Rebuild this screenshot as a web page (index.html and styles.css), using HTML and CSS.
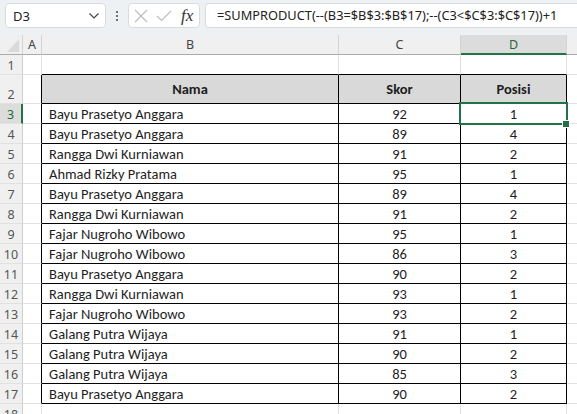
FILE: index.html
```html
<!DOCTYPE html>
<html>
<head>
<meta charset="utf-8">
<link rel="stylesheet" href="styles.css">
</head>
<body>
<div class="topbar">
  <div class="namebox">
    <span class="nb-text">D3</span>
    <svg class="chev" width="12" height="8" viewBox="0 0 12 8"><path d="M1.5 1.5 L6 6 L10.5 1.5" fill="none" stroke="#444" stroke-width="1.2"/></svg>
  </div>
  <div class="dots"><span></span><span></span><span></span></div>
  <div class="fxbox">
    <svg width="14" height="14" viewBox="0 0 14 14"><path d="M1 1 L13 13 M13 1 L1 13" stroke="#bdbdbd" stroke-width="1.2" fill="none"/></svg>
    <svg width="16" height="12" viewBox="0 0 16 12"><path d="M1 6 L5.5 10.5 L15 1" stroke="#bdbdbd" stroke-width="1.2" fill="none"/></svg>
    <span class="fx">fx</span>
  </div>
  <div class="formula">=SUMPRODUCT(--(B3=$B$3:$B$17);--(C3&lt;$C$3:$C$17))+1</div>
</div>
<table class="sheet">
  <colgroup>
    <col class="c-rh"><col class="c-a"><col class="c-b"><col class="c-c"><col class="c-d"><col class="c-e">
  </colgroup>
  <tr class="hdr">
    <td class="corner"><svg width="12" height="13" viewBox="0 0 12 13"><polygon points="12,0 12,13 0,13" fill="#dadada"/></svg></td>
    <td class="ch">A</td><td class="ch">B</td><td class="ch">C</td><td class="ch ch-sel">D</td><td class="ch"></td>
  </tr>
  <tr class="r"><td class="rh">1</td><td></td><td class="tb-top"></td><td class="tb-top"></td><td class="tb-top"></td><td></td></tr>
  <tr class="r2"><td class="rh">2</td><td class="tb-left"></td><td class="tb th">Nama</td><td class="tb th">Skor</td><td class="tb th">Posisi</td><td></td></tr>
  <tr class="r"><td class="rh rh-sel">3</td><td class="tb-left"></td><td class="tb nm">Bayu Prasetyo Anggara</td><td class="tb num">92</td><td class="tb num sel">1<div class="selbox"></div><div class="handle"></div></td><td></td></tr>
  <tr class="r"><td class="rh">4</td><td class="tb-left"></td><td class="tb nm">Bayu Prasetyo Anggara</td><td class="tb num">89</td><td class="tb num">4</td><td></td></tr>
  <tr class="r"><td class="rh">5</td><td class="tb-left"></td><td class="tb nm">Rangga Dwi Kurniawan</td><td class="tb num">91</td><td class="tb num">2</td><td></td></tr>
  <tr class="r"><td class="rh">6</td><td class="tb-left"></td><td class="tb nm">Ahmad Rizky Pratama</td><td class="tb num">95</td><td class="tb num">1</td><td></td></tr>
  <tr class="r"><td class="rh">7</td><td class="tb-left"></td><td class="tb nm">Bayu Prasetyo Anggara</td><td class="tb num">89</td><td class="tb num">4</td><td></td></tr>
  <tr class="r"><td class="rh">8</td><td class="tb-left"></td><td class="tb nm">Rangga Dwi Kurniawan</td><td class="tb num">91</td><td class="tb num">2</td><td></td></tr>
  <tr class="r"><td class="rh">9</td><td class="tb-left"></td><td class="tb nm">Fajar Nugroho Wibowo</td><td class="tb num">95</td><td class="tb num">1</td><td></td></tr>
  <tr class="r"><td class="rh">10</td><td class="tb-left"></td><td class="tb nm">Fajar Nugroho Wibowo</td><td class="tb num">86</td><td class="tb num">3</td><td></td></tr>
  <tr class="r"><td class="rh">11</td><td class="tb-left"></td><td class="tb nm">Bayu Prasetyo Anggara</td><td class="tb num">90</td><td class="tb num">2</td><td></td></tr>
  <tr class="r"><td class="rh">12</td><td class="tb-left"></td><td class="tb nm">Rangga Dwi Kurniawan</td><td class="tb num">93</td><td class="tb num">1</td><td></td></tr>
  <tr class="r"><td class="rh">13</td><td class="tb-left"></td><td class="tb nm">Fajar Nugroho Wibowo</td><td class="tb num">93</td><td class="tb num">2</td><td></td></tr>
  <tr class="r"><td class="rh">14</td><td class="tb-left"></td><td class="tb nm">Galang Putra Wijaya</td><td class="tb num">91</td><td class="tb num">1</td><td></td></tr>
  <tr class="r"><td class="rh">15</td><td class="tb-left"></td><td class="tb nm">Galang Putra Wijaya</td><td class="tb num">90</td><td class="tb num">2</td><td></td></tr>
  <tr class="r"><td class="rh">16</td><td class="tb-left"></td><td class="tb nm">Galang Putra Wijaya</td><td class="tb num">85</td><td class="tb num">3</td><td></td></tr>
  <tr class="r"><td class="rh">17</td><td class="tb-left"></td><td class="tb nm">Bayu Prasetyo Anggara</td><td class="tb num">90</td><td class="tb num">2</td><td></td></tr>
  <tr class="r"><td class="rh">18</td><td></td><td></td><td></td><td></td><td></td></tr>
</table>
</body>
</html>
```
FILE: styles.css
```css
html, body {
  margin: 0;
  padding: 0;
  overflow: hidden;
  width: 577px;
  height: 414px;
  background: #ffffff;
}
.topbar {
  height: 35px;
  box-sizing: border-box;
  background: #eef1f4;
  display: flex;
  align-items: flex-start;
  padding: 3px 0 0 5px;
  overflow: hidden;
  font-family: "Noto Sans", "Open Sans", sans-serif;
}
.topbar > * { flex-shrink: 0; }
.namebox {
  width: 101px;
  height: 25px;
  box-sizing: border-box;
  background: #fff;
  border: 1px solid #d9dbde;
  border-radius: 4px;
  display: flex;
  align-items: center;
  justify-content: space-between;
  padding: 0 5px 0 7px;
  font-size: 13px;
  color: #222;
}
.chev { margin-top: 1px; }
.dots {
  width: 22px;
  height: 25px;
  display: flex;
  flex-direction: column;
  align-items: center;
  justify-content: center;
  gap: 2px;
}
.dots span {
  width: 2px;
  height: 2px;
  background: #444;
  border-radius: 1px;
}
.fxbox {
  width: 72px;
  height: 25px;
  box-sizing: border-box;
  background: #fff;
  border: 1px solid #d9dbde;
  border-radius: 4px;
  display: flex;
  align-items: center;
  padding: 0 4px 0 5px;
  gap: 8px;
}
.fx {
  font-family: "Liberation Serif", "DejaVu Serif", serif;
  font-style: italic;
  font-size: 17px;
  color: #333;
  margin-left: 1px;
  line-height: 1;
}
.formula {
  margin-left: 5px;
  width: 372px;
  height: 25px;
  box-sizing: border-box;
  background: #fff;
  border: 1px solid #d9dbde;
  border-right: none;
  border-radius: 4px 0 0 4px;
  padding: 0 0 0 11px;
  font-size: 12.8px;
  line-height: 23px;
  color: #222;
  white-space: nowrap;
  overflow: hidden;
}
.sheet {
  border-collapse: separate;
  border-spacing: 0;
  table-layout: fixed;
  width: 620px;
  font-family: "Carlito", "Liberation Sans", sans-serif;
  font-size: 14.5px;
  color: #1e1e1e;
}
.c-rh { width: 23px; }
.c-a { width: 19px; }
.c-b { width: 297px; }
.c-c { width: 122px; }
.c-d { width: 106px; }
.c-e { width: 53px; }
.sheet td {
  box-sizing: border-box;
  border-right: 1px solid #e1e1e1;
  border-bottom: 1px solid #e1e1e1;
  padding: 0;
  white-space: nowrap;
  overflow: visible;
}
.hdr td {
  height: 20px;
  background: #f0f0f0;
  border-bottom: 1px solid #ababab;
  border-right: 1px solid #d4d4d4;
  font-family: "Noto Sans", "Open Sans", sans-serif;
  font-size: 12.5px;
  color: #444;
  text-align: center;
  vertical-align: middle;
}
.hdr td.corner {
  text-align: right;
  vertical-align: bottom;
  padding: 0 3px 2px 0;
  line-height: 0;
}
.hdr td.ch-sel {
  background: #dcdcdc;
  color: #1d6b3e;
  border-bottom: 2px solid #217346;
}
.r td { height: 20px; }
.r2 td { height: 29px; }
.sheet td.rh {
  background: #f0f0f0;
  border-right: 1px solid #cfcfcf;
  border-bottom: 1px solid #e1e1e1;
  font-family: "Noto Sans", "Open Sans", sans-serif;
  font-size: 12.5px;
  color: #555;
  text-align: center;
  vertical-align: bottom;
  line-height: 17px;
}
.sheet td.rh-sel {
  background: #dcdcdc;
  color: #1d6b3e;
  border-right: 2px solid #217346;
}
.sheet td.tb-top { border-bottom: 1px solid #000; }
.sheet td.tb-left { border-right: 1px solid #000; }
.sheet td.tb {
  border-right: 1px solid #000;
  border-bottom: 1px solid #000;
  vertical-align: bottom;
  line-height: 18px;
}
.sheet td.th {
  background: #d9d9d9;
  font-weight: bold;
  text-align: center;
  vertical-align: middle;
  line-height: 18px;
}
.nm { padding-left: 7px !important; }
.num { text-align: center; }
.sel { position: relative; }
.selbox {
  position: absolute;
  left: -2px;
  top: -2px;
  right: -2px;
  bottom: -2px;
  border: 2px solid #217346;
  pointer-events: none;
}
.handle {
  position: absolute;
  right: -4px;
  bottom: -5px;
  width: 6px;
  height: 6px;
  background: #217346;
  border: 1px solid #fff;
}
```
